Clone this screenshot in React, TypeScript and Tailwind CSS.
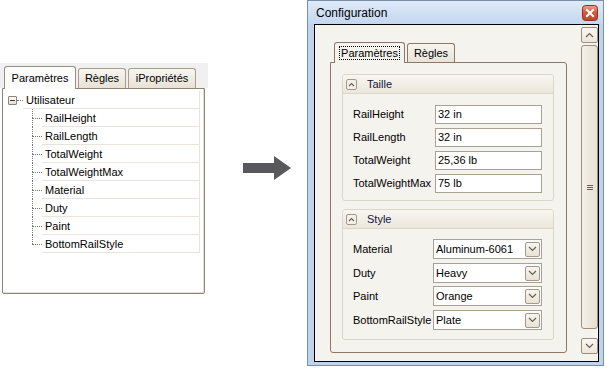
import React from 'react';

const treeItems = ['RailHeight', 'RailLength', 'TotalWeight', 'TotalWeightMax', 'Material', 'Duty', 'Paint', 'BottomRailStyle'];

const sizeFields = [
  ['RailHeight', '32 in'],
  ['RailLength', '32 in'],
  ['TotalWeight', '25,36 lb'],
  ['TotalWeightMax', '75 lb'],
];

const styleFields = [
  ['Material', 'Aluminum-6061', 'mt-0'],
  ['Duty', 'Heavy', 'mt-[4px]'],
  ['Paint', 'Orange', 'mt-[3px]'],
  ['BottomRailStyle', 'Plate', 'mt-[4px]'],
];

// petit chevron pour les boutons
const Chevron = ({ up = false }: { up?: boolean }) => (
  <svg width="9" height="6" viewBox="0 0 9 6" fill="none" stroke="#6b5d50" strokeWidth="1.2">
    {up ? <polyline points="1,5 4.5,1.5 8,5" /> : <polyline points="1,1 4.5,4.5 8,1" />}
  </svg>
);

// bouton fermer (style Windows 7)
const CloseButton = () => (
  <svg width="16" height="16" viewBox="0 0 16 16">
    <defs>
      <linearGradient id="closeGrad" x1="0" y1="0" x2="0" y2="1">
        <stop offset="0" stopColor="#eba390" />
        <stop offset="0.45" stopColor="#d85a40" />
        <stop offset="1" stopColor="#c2422a" />
      </linearGradient>
    </defs>
    <rect x="0.5" y="0.5" width="15" height="15" rx="3" fill="url(#closeGrad)" stroke="#8a3322" />
    <path d="M5 5 L11 11 M11 5 L5 11" stroke="#ffffff" strokeWidth="2" strokeLinecap="square" />
  </svg>
);

const TreePanel = () => (
  <div className="w-[208px] shrink-0 pt-[63px]">
    {/* onglets */}
    <div className="h-[25px] bg-[#f0f0f0] flex items-end gap-[2px] pl-[4px]">
      <div className="relative z-10 -mb-px w-[72px] h-[23px] flex items-center justify-center rounded-t-[3px] border border-b-0 border-[#9a8e80] bg-[#fcfcfb]">
        Paramètres
      </div>
      <div className="w-[48px] h-[20px] flex items-center justify-center rounded-t-[3px] border border-b-0 border-[#a79c8e] bg-gradient-to-b from-[#f8f6f1] to-[#e7e2d6]">
        Règles
      </div>
      <div className="w-[68px] h-[20px] flex items-center justify-center rounded-t-[3px] border border-b-0 border-[#a79c8e] bg-gradient-to-b from-[#f8f6f1] to-[#e7e2d6]">
        iPropriétés
      </div>
    </div>
    {/* arbre */}
    <div className="ml-[2px] w-[203px] h-[206px] border border-[#8f8577] rounded-b-[2px] bg-white shadow-[inset_-1px_-1px_0_#e4e0d6]">
      <div className="pt-[2px]">
        <div className="flex items-center h-[18px] pl-[5px] pr-[4px]">
          <div className="w-[9px] h-[9px] border border-[#8e8474] rounded-[1px] bg-gradient-to-b from-white to-[#e2ddd2] flex items-center justify-center">
            <div className="w-[5px] h-px bg-[#3c3c3c]" />
          </div>
          <div className="w-[6px] border-t border-dotted border-[#777]" />
          <div className="flex-1 h-[18px] flex items-center pl-[3px] pt-px border-b border-r border-[#e8e4da]">Utilisateur</div>
        </div>
        <div className="pl-[29px] pr-[4px]">
          {treeItems.map((name, i) => (
            <div key={name} className="flex h-[18px]">
              <div className="w-[10px] flex flex-col">
                <div className="h-[9px] border-l border-dotted border-[#777]" />
                <div
                  className={
                    i === treeItems.length - 1
                      ? 'h-[9px] border-t border-dotted border-[#777]'
                      : 'h-[9px] border-t border-l border-dotted border-[#777]'
                  }
                />
              </div>
              <div className="flex-1 flex items-center pl-[3px] pt-px border-b border-r border-[#e8e4da]">{name}</div>
            </div>
          ))}
        </div>
      </div>
    </div>
  </div>
);

const Arrow = () => (
  <div className="w-[99px] shrink-0 pl-[35px] pt-[155px]">
    <svg width="49" height="26" viewBox="0 0 49 26">
      <polygon points="0,8 31,8 31,1 48,13 31,25 31,18 0,18" fill="#59595b" />
    </svg>
  </div>
);

const GroupHeader = ({ title }: { title: string }) => (
  <div className="h-[19px] flex items-center pl-[3px] border-b border-[#dcd6c9] bg-gradient-to-b from-[#f8f6f2] to-[#ebe7dd] rounded-t-[2px]">
    <div className="w-[11px] h-[11px] border border-[#a49a8c] rounded-[2px] bg-[#f3f0ea] flex items-center justify-center">
      <svg width="7" height="5" viewBox="0 0 7 5" fill="none" stroke="#6b5d50" strokeWidth="1.1">
        <polyline points="1,4 3.5,1.5 6,4" />
      </svg>
    </div>
    <span className="ml-[10px] text-[#14143c]">{title}</span>
  </div>
);

const ConfigWindow = () => (
  <div className="w-[297px] h-[366px] shrink-0 border border-[#7b8ea8] bg-[#bfd3ec] flex flex-col">
    {/* barre de titre */}
    <div className="h-[23px] flex items-center pl-[8px] pr-[5px] bg-gradient-to-b from-[#dfeaf8] to-[#c3d7ef]">
      <span className="text-[12px] text-black">Configuration</span>
      <div className="ml-auto flex">
        <CloseButton />
      </div>
    </div>
    <div className="flex-1 flex pl-[6px] pr-[4px] pb-[3px]">
      <div className="flex-1 flex border border-black bg-[#f5f3ee]">
        {/* contenu */}
        <div className="w-[266px] pl-[15px] pt-[17px]">
          <div className="h-[20px] flex items-end gap-[2px] pl-[4px]">
            <div className="relative z-10 -mb-px w-[71px] h-[21px] flex items-center justify-center rounded-t-[3px] border border-b-0 border-[#8b7868] bg-[#f5f3ee]">
              <span className="border border-dotted border-black px-px leading-[12px]">Paramètres</span>
            </div>
            <div className="w-[48px] h-[19px] flex items-center justify-center rounded-t-[3px] border border-b-0 border-[#8b7868] bg-gradient-to-b from-[#f7f5f0] to-[#e9e4d9]">
              Règles
            </div>
          </div>
          <div className="w-[237px] h-[291px] border border-[#8b7868] rounded-b-[3px] rounded-tr-[3px] bg-[#f5f3ee] pl-[11px] pt-[11px]">
            {/* Taille */}
            <div className="w-[212px] border border-[#dcd6c9] rounded-[3px]">
              <GroupHeader title="Taille" />
              <div className="pl-[10px] pr-[11px] pt-[11px] pb-[7px] flex flex-col gap-[4px]">
                {sizeFields.map(([label, value]) => (
                  <div key={label} className="flex items-center h-[19px]">
                    <span className="w-[82px]">{label}</span>
                    <div className="flex-1 h-[19px] border border-[#aaa093] bg-white flex items-center pl-[2px]">{value}</div>
                  </div>
                ))}
              </div>
            </div>
            {/* Style */}
            <div className="mt-[8px] w-[212px] border border-[#dcd6c9] rounded-[3px]">
              <GroupHeader title="Style" />
              <div className="pl-[10px] pr-[11px] pt-[10px] pb-[9px] flex flex-col">
                {styleFields.map(([label, value, mt]) => (
                  <div key={label} className={`flex items-center h-[20px] ${mt}`}>
                    <span className="w-[80px]">{label}</span>
                    <div className="flex-1 h-[20px] border border-[#aaa093] bg-white flex items-center pl-[2px] pr-[1px]">
                      <span className="flex-1">{value}</span>
                      <div className="w-[15px] h-[15px] border border-[#a49a8c] rounded-[2px] bg-gradient-to-b from-[#f7f5f0] to-[#e8e3d8] flex items-center justify-center">
                        <Chevron />
                      </div>
                    </div>
                  </div>
                ))}
              </div>
            </div>
          </div>
        </div>
        {/* barre de défilement */}
        <div className="w-[17px] flex flex-col pt-[2px] pb-[7px]">
          <div className="h-[16px] border border-[#9d8e7f] rounded-[2px] bg-gradient-to-b from-[#f9f7f3] to-[#ebe6dc] flex items-center justify-center">
            <Chevron up />
          </div>
          <div className="mt-[2px] h-[284px] border border-[#9d8e7f] rounded-[3px] bg-gradient-to-r from-[#f4f1ea] to-[#e6e0d3] flex items-center justify-center">
            <div className="flex flex-col gap-[1px]">
              <div className="w-[6px] h-px bg-[#6b5d50]" />
              <div className="w-[6px] h-px bg-[#6b5d50]" />
              <div className="w-[6px] h-px bg-[#6b5d50]" />
            </div>
          </div>
          <div className="flex-1" />
          <div className="h-[16px] border border-[#9d8e7f] rounded-[2px] bg-gradient-to-b from-[#f9f7f3] to-[#ebe6dc] flex items-center justify-center">
            <Chevron />
          </div>
        </div>
      </div>
    </div>
  </div>
);

export default function App() {
  return (
    <div className="w-[607px] h-[368px] bg-white flex overflow-hidden font-['Liberation_Sans',Arial,sans-serif] text-[11px] text-black">
      <TreePanel />
      <Arrow />
      <ConfigWindow />
    </div>
  );
}
